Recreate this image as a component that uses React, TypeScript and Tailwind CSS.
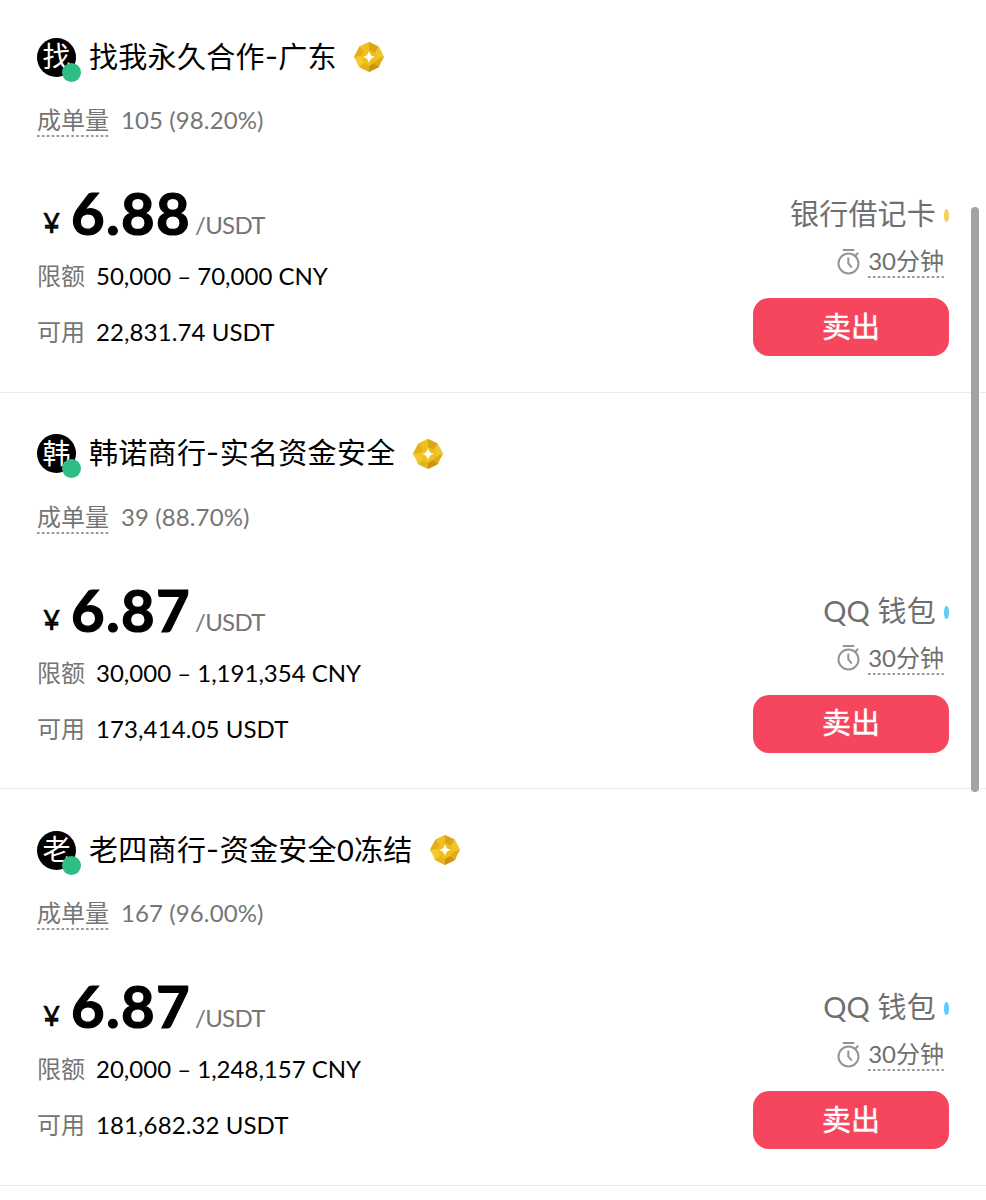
import { ReactNode } from "react";

interface Offer {
    initial: string;
    name: string;
    orders: string;
    rate: string;
    price: string;
    limit: string;
    available: string;
    method: string;
    methodColor: string;
}

const offers: Offer[] = [
    {
        initial: "找",
        name: "找我永久合作-广东",
        orders: "105",
        rate: "98.20%",
        price: "6.88",
        limit: "50,000 – 70,000 CNY",
        available: "22,831.74 USDT",
        method: "银行借记卡",
        methodColor: "bg-[#f8cf5f]",
    },
    {
        initial: "韩",
        name: "韩诺商行-实名资金安全",
        orders: "39",
        rate: "88.70%",
        price: "6.87",
        limit: "30,000 – 1,191,354 CNY",
        available: "173,414.05 USDT",
        method: "QQ 钱包",
        methodColor: "bg-[#62cbfa]",
    },
    {
        initial: "老",
        name: "老四商行-资金安全0冻结",
        orders: "167",
        rate: "96.00%",
        price: "6.87",
        limit: "20,000 – 1,248,157 CNY",
        available: "181,682.32 USDT",
        method: "QQ 钱包",
        methodColor: "bg-[#62cbfa]",
    },
];

function DottedLabel({ children }: { children: ReactNode }) {
    return (
        <span className="relative">
            {children}
            <svg className="absolute bottom-[1px] left-0 h-0.5 w-full">
                <line x1="0" y1="1" x2="100%" y2="1" stroke="#777" strokeWidth="1.6" strokeDasharray="2.6 2.3" />
            </svg>
        </span>
    );
}

function MerchantName({ name }: { name: string }) {
    const [first, second] = name.split("-");

    return (
        <h2 className="mr-[17px] text-[29px] leading-none tracking-[0.3px] text-black">
            {first}
            <span className="inline-block w-[13.5px] -translate-y-px scale-x-125 text-center">-</span>
            {second}
        </h2>
    );
}

function MerchantBadge() {
    return (
        <svg viewBox="0 0 30 30" className="size-[30px] shrink-0">
            <path d="M15 0 24.5 4.5 27.5 10 30 15 27 20 25 25 15 30 5 25 3 20 0 15 2.5 10 5.5 4.5Z" fill="#efc01c" />
            <path d="M15 0 24.5 4.5 21 11 15 8Z" fill="#dba51a" />
            <path d="M15 0 5.5 4.5 10 10 15 8Z" fill="#f0c022" />
            <path d="M24.5 4.5 27.5 10 30 15 24 17 21 11Z" fill="#f0c42c" />
            <path d="M5.5 4.5 2.5 10 0 15 7 14 10 10Z" fill="#e3b01a" />
            <path d="M0 15 3 20 5 25 10 21 7 14Z" fill="#f3c92f" />
            <path d="M30 15 27 20 25 25 20 21 24 17Z" fill="#e0ab1c" />
            <path d="M5 25 15 30 15 24 10 21Z" fill="#e5b41c" />
            <path d="M25 25 15 30 15 24 20 21Z" fill="#cb9214" />
            <path d="M15 9C16 12.7 17.3 14 21 15 17.3 16 16 17.3 15 21 14 17.3 12.7 16 9 15 12.7 14 14 12.7 15 9Z" fill="#fff" />
        </svg>
    );
}

function TimerIcon() {
    return (
        <svg viewBox="0 0 24 27" className="-mr-px h-[27px] w-6" fill="none" stroke="#959595" strokeWidth="2">
            <circle cx="11.5" cy="15.5" r="10" />
            <path d="M5.8 2H17.4M17.8 8.2 21.2 4.8M11.3 9.5V15.5L14.8 19.6" />
        </svg>
    );
}

function OfferRow({ offer }: { offer: Offer }) {
    return (
        <article className="h-[396.5px] border-b border-[#ebebeb] px-[37px] pt-9">
            <header className="flex h-[50px] items-center">
                <div className="relative mr-[13px] flex size-[39px] items-center justify-center rounded-full bg-black pb-0.5 text-[28px] leading-none text-white">
                    {offer.initial}
                    <span className="absolute -right-[5px] -bottom-[5px] size-[19px] rounded-full bg-[#2ebd85]" />
                </div>
                <div className="pb-0.5">
                    <MerchantName name={offer.name} />
                </div>
                <MerchantBadge />
            </header>

            <div className="flex h-[76px] items-center gap-3 text-[24px] text-[#757575]">
                <DottedLabel>成单量</DottedLabel>
                <span className="tracking-[0.1px]">
                    {offer.orders} ({offer.rate})
                </span>
            </div>

            <div className="flex justify-between pt-0.5">
                <div className="flex flex-col text-[24px]">
                    <div className="flex h-[88px] items-baseline pl-1.5 leading-[106px]">
                        <span className="relative -top-0.5 w-7 origin-left scale-x-110 text-[27px] text-black [-webkit-text-stroke:0.5px_black]">
                            ¥
                        </span>
                        <span className="w-[125px] text-[58px] font-bold tracking-[1.3px] text-black [-webkit-text-stroke:1.2px_black]">
                            {offer.price}
                        </span>
                        <span className="relative -top-px -left-px tracking-[-0.7px] text-[#757575]">/USDT</span>
                    </div>
                    <div className="flex h-14 items-center gap-[11px]">
                        <span className="text-[#757575]">限额</span>
                        <span className="text-black">{offer.limit}</span>
                    </div>
                    <div className="flex h-14 items-center gap-[11px]">
                        <span className="text-[#757575]">可用</span>
                        <span className="tracking-[0.1px] text-black">{offer.available}</span>
                    </div>
                </div>

                <div className="flex w-[196px] flex-col items-end pt-[30px] text-[#6f6f6f]">
                    <div className="flex h-12 items-center gap-2">
                        <span className="text-[29px] tracking-[0.2px] whitespace-nowrap">{offer.method}</span>
                        <span className={`mt-[3px] h-[13px] w-[5px] rounded-[45%] ${offer.methodColor}`} />
                    </div>
                    <div className="flex h-[46px] items-center gap-2 pr-[5px] text-[24px]">
                        <TimerIcon />
                        <DottedLabel>30分钟</DottedLabel>
                    </div>
                    <button className="mt-3.5 h-[58px] w-full rounded-2xl bg-[#f6465d] pb-0.5 text-[29px] leading-none text-white [-webkit-text-stroke:0.4px_white]">
                        卖出
                    </button>
                </div>
            </div>
        </article>
    );
}

export default function App() {
    return (
        <main className="relative h-[1200px] w-[986px] overflow-hidden bg-white font-[Lato,'Noto_Sans_CJK_SC',sans-serif]">
            <div className="-mt-1">
                {offers.map((offer) => (
                    <OfferRow key={offer.initial} offer={offer} />
                ))}
            </div>
            <div className="absolute top-[207px] right-[7px] h-[585px] w-2 rounded-full bg-[#a3a3a3]" />
        </main>
    );
}
